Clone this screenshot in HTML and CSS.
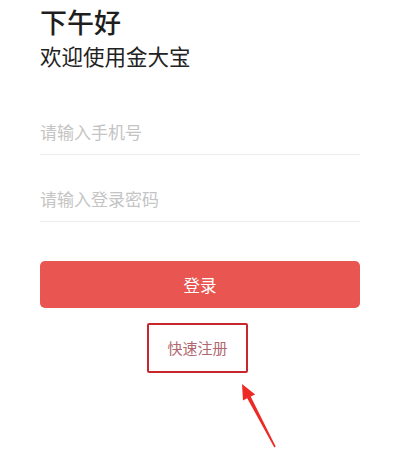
FILE: index.html
```html
<!DOCTYPE html>
<html lang="zh">
<head>
<meta charset="utf-8">
<link rel="stylesheet" href="styles.css">
</head>
<body>
<div class="page">
  <h1 class="title">下午好</h1>
  <p class="subtitle">欢迎使用金大宝</p>
  <div class="form">
    <div class="field"><span class="placeholder">请输入手机号</span></div>
    <div class="field"><span class="placeholder">请输入登录密码</span></div>
    <button class="login">登录</button>
    <div class="register-row">
      <span class="register">快速注册</span>
    </div>
  </div>
  <svg class="arrow" width="60" height="80" viewBox="0 0 60 80">
    <polygon points="12,6 25.2,16.6 20.7,18.4 45.7,68.6 44.3,69.4 17.2,20.2 13,22.6" fill="#ee2a24"/>
  </svg>
</div>
</body>
</html>
```
FILE: styles.css
```css
html, body {
  margin: 0;
  padding: 0;
  background: #ffffff;
}
body {
  font-family: "Noto Sans CJK SC", "Noto Sans", sans-serif;
  width: 400px;
  height: 452px;
  overflow: hidden;
}
.page {
  position: relative;
  padding: 6px 40px 0 40px;
  height: 446px;
}
.title {
  margin: 0;
  font-size: 27px;
  font-weight: 500;
  line-height: 32px;
  color: #1e1e1e;
}
.subtitle {
  margin: 4px 0 0 0;
  font-size: 21.5px;
  font-weight: 400;
  line-height: 28px;
  color: #222;
}
.form {
  margin-top: 18px;
  display: flex;
  flex-direction: column;
}
.field {
  border-bottom: 1px solid #ececec;
  display: flex;
  align-items: flex-end;
  padding-bottom: 12px;
  box-sizing: border-box;
  height: 67px;
}
.placeholder {
  font-size: 17px;
  line-height: 20px;
  color: #c4c4c4;
}
.login {
  margin-top: 39px;
  height: 47px;
  border: none;
  border-radius: 5px;
  background: #e95651;
  color: #fff;
  font-family: inherit;
  font-size: 16.5px;
  padding: 0;
}
.register-row {
  display: flex;
  justify-content: center;
  margin-top: 15px;
  padding-right: 5px;
}
.register {
  display: block;
  width: 101px;
  height: 50px;
  box-sizing: border-box;
  border: 2px solid #c9272c;
  border-radius: 2px;
  text-align: center;
  line-height: 46px;
  font-size: 15px;
  color: #b0676f;
}
.arrow {
  position: absolute;
  left: 230px;
  top: 378px;
}
```
